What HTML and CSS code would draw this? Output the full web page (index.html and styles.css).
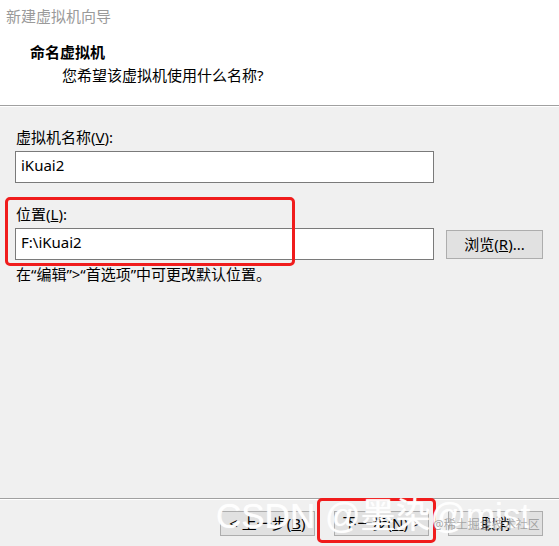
FILE: index.html
```html
<!DOCTYPE html>
<html>
<head>
    <meta charset="utf-8">
    <title>新建虚拟机向导</title>
    <link rel="stylesheet" href="styles.css">
</head>
<body>

<div class="wizard">
    <div class="head">
        <div class="caption">新建虚拟机向导</div>
        <div class="step_title">命名虚拟机</div>
        <div class="step_desc">您希望该虚拟机使用什么名称?</div>
    </div>
    <div class="rule"></div>

    <div class="content">
        <div class="field_label">虚拟机名称(<u>V</u>):</div>
        <div class="field_row">
            <div class="textbox">iKuai2</div>
        </div>

        <div class="field_label second">位置(<u>L</u>):</div>
        <div class="field_row">
            <div class="textbox">F:\iKuai2</div>
            <div class="button browse">浏览(<u>R</u>)...</div>
        </div>
        <div class="hint">在“编辑”&gt;“首选项”中可更改默认位置。</div>

        <div class="mark mark_location"></div>
    </div>

    <div class="rule"></div>
    <div class="foot">
        <div class="button">&lt; 上一步(<u>B</u>)</div>
        <div class="button next">下一步(<u>N</u>) &gt;</div>
        <div class="button">取消</div>

        <div class="mark mark_next"></div>
        <div class="watermark">CSDN @墨染@mist</div>
        <div class="watermark_small">@稀土掘金技术社区</div>
    </div>
</div>

</body>
</html>
```

FILE: styles.css
```css
html, body {
    margin: 0;
    padding: 0;
}

body {
    width: 559px;
    height: 546px;
    overflow: hidden;
    background: #f0f0f0;
    font-family: "Noto Sans", "Noto Sans CJK SC", sans-serif;
    font-size: 15px;
    line-height: 20px;
    color: #000;
}

.wizard {
    display: flex;
    flex-direction: column;
    height: 546px;
}

/* header */

.head {
    height: 105px;
    background: #fff;
    padding-top: 6px;
    box-sizing: border-box;
}

.caption {
    padding-left: 6px;
    color: #9a9a9a;
}

.step_title {
    margin-top: 16px;
    padding-left: 30px;
    font-weight: bold;
}

.step_desc {
    margin-top: 3px;
    padding-left: 62px;
}

.rule {
    height: 1px;
    background: #a0a0a0;
    border-bottom: 1px solid #fff;
}

/* fields */

.content {
    position: relative;
    flex: 1;
    padding: 20px 0 0 15px;
}

.field_label {
    padding-left: 1px;
}

.field_label.second {
    margin-top: 21px;
}

.field_row {
    display: flex;
    align-items: center;
    gap: 12px;
    margin-top: 4px;
}

.textbox {
    width: 419px;
    height: 32px;
    box-sizing: border-box;
    border: 1px solid #7a7a7a;
    background: #fff;
    padding: 0 5px;
    line-height: 26px;
}

.hint {
    margin-top: 4px;
    padding-left: 1px;
}

.button {
    width: 97px;
    height: 29px;
    box-sizing: border-box;
    border: 1px solid #adadad;
    background: #e1e1e1;
    text-align: center;
    line-height: 26px;
}

/* footer */

.foot {
    position: relative;
    height: 46px;
    display: flex;
    justify-content: flex-end;
    align-items: flex-start;
    gap: 19px;
    padding: 11px 16px 0 0;
    box-sizing: border-box;
}

.foot .button {
    width: 95px;
    height: 25px;
    line-height: 22px;
}

/* annotations drawn over the dialog */

.mark {
    position: absolute;
    border: 3px solid #f01c1c;
    border-radius: 5px;
}

.mark_location {
    left: 5px;
    top: 90px;
    width: 284px;
    height: 63px;
}

.mark_next {
    left: 317px;
    top: -2px;
    width: 113px;
    height: 39px;
}

.watermark {
    position: absolute;
    left: 216px;
    top: -6px;
    font-family: "Liberation Sans", "Noto Sans CJK SC", sans-serif;
    font-size: 35px;
    line-height: 44px;
    color: rgba(255, 255, 255, 0.9);
    text-shadow: 0 0 1px rgba(255, 255, 255, 0.8);
    white-space: nowrap;
}

.watermark_small {
    position: absolute;
    left: 433px;
    top: 15px;
    font-size: 12px;
    color: rgba(120, 120, 120, 0.6);
    white-space: nowrap;
}
```
